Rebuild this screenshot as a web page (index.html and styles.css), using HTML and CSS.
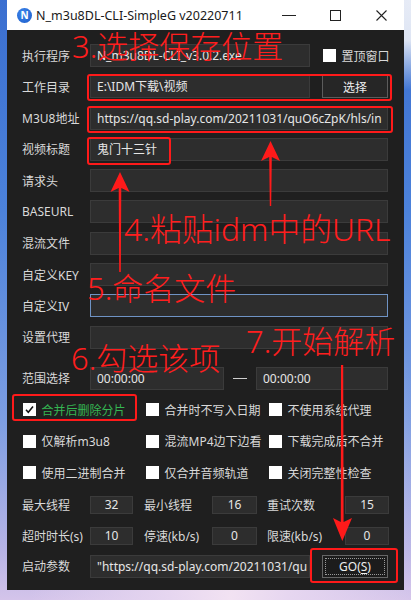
FILE: index.html
```html
<!DOCTYPE html>
<html lang="zh-CN">
<head>
<meta charset="utf-8">
<title>N_m3u8DL-CLI-SimpleG</title>
<link rel="stylesheet" href="styles.css">
</head>
<body>
<div class="win">
  <div class="titlebar">
    <span class="app-icon">N</span>
    <span class="title">N_m3u8DL-CLI-SimpleG v20220711</span>
    <div class="ctrls">
      <span class="ctrl"><svg width="14" height="10" viewBox="0 0 14 10"><line x1="0" y1="5.5" x2="14" y2="5.5" stroke="#222" stroke-width="1"/></svg></span>
      <span class="ctrl"><svg width="11" height="11" viewBox="0 0 11 11"><rect x="0.5" y="0.5" width="10" height="10" fill="none" stroke="#222" stroke-width="1"/></svg></span>
      <span class="ctrl"><svg width="11" height="11" viewBox="0 0 11 11"><path d="M0.5 0.5 L10.5 10.5 M10.5 0.5 L0.5 10.5" stroke="#222" stroke-width="1.1"/></svg></span>
    </div>
  </div>
  <div class="content">
    <div class="form">
      <div class="row">
        <span class="lbl">执行程序</span>
        <div class="inp w220">N_m3u8DL-CLI_v3.0.2.exe</div>
        <span class="cb top-cb"><span class="box"></span>置顶窗口</span>
      </div>
      <div class="row">
        <span class="lbl">工作目录</span>
        <div class="inp w220">E:\IDM下载\视频</div>
        <span class="btn">选择</span>
      </div>
      <div class="row">
        <span class="lbl">M3U8地址</span>
        <div class="inp full">https://qq.sd-play.com/20211031/quO6cZpK/hls/in</div>
      </div>
      <div class="row">
        <span class="lbl">视频标题</span>
        <div class="inp full">鬼门十三针</div>
      </div>
      <div class="row">
        <span class="lbl">请求头</span>
        <div class="inp full"></div>
      </div>
      <div class="row">
        <span class="lbl">BASEURL</span>
        <div class="inp full"></div>
      </div>
      <div class="row">
        <span class="lbl">混流文件</span>
        <div class="inp full"></div>
      </div>
      <div class="row">
        <span class="lbl">自定义KEY</span>
        <div class="inp full"></div>
      </div>
      <div class="row">
        <span class="lbl">自定义IV</span>
        <div class="inp full focus"></div>
      </div>
      <div class="row">
        <span class="lbl">设置代理</span>
        <div class="inp full"></div>
      </div>
    </div>
    <div class="row range">
      <span class="lbl">范围选择</span>
      <div class="inp w134">00:00:00</div>
      <span class="dash"></span>
      <div class="inp full">00:00:00</div>
    </div>
    <div class="checks">
      <span class="cb on"><span class="box"><svg width="13" height="13" viewBox="0 0 13 13"><path d="M3 6.8 L5.3 9.2 L10 3.6" fill="none" stroke="#111" stroke-width="1.6"/></svg></span>合并后删除分片</span>
      <span class="cb"><span class="box"></span>合并时不写入日期</span>
      <span class="cb"><span class="box"></span>不使用系统代理</span>
      <span class="cb"><span class="box"></span>仅解析m3u8</span>
      <span class="cb"><span class="box"></span>混流MP4边下边看</span>
      <span class="cb"><span class="box"></span>下载完成后不合并</span>
      <span class="cb"><span class="box"></span>使用二进制合并</span>
      <span class="cb"><span class="box"></span>仅合并音频轨道</span>
      <span class="cb"><span class="box"></span>关闭完整性检查</span>
    </div>
    <div class="nums">
      <div class="nrow">
        <span class="lbl">最大线程</span>
        <div class="num n1">32</div>
        <span class="lbl l2">最小线程</span>
        <div class="num n2">16</div>
        <span class="lbl l3">重试次数</span>
        <div class="num n3">15</div>
      </div>
      <div class="nrow">
        <span class="lbl">超时时长(s)</span>
        <div class="num n1">10</div>
        <span class="lbl l2">停速(kb/s)</span>
        <div class="num n2">0</div>
        <span class="lbl l3">限速(kb/s)</span>
        <div class="num n3">0</div>
      </div>
    </div>
    <div class="row last">
      <span class="lbl">启动参数</span>
      <div class="inp w220">"https://qq.sd-play.com/20211031/qu</div>
      <span class="btn go"><span class="go-in">GO(<u>S</u>)</span></span>
    </div>
  </div>
</div>

<div class="annot">
  <div class="rbox ra"></div>
  <div class="rbox rb"></div>
  <div class="rbox rc"></div>
  <div class="rbox rd"></div>
  <div class="rbox re"></div>
  <div class="note t3">3.选择保存位置</div>
  <div class="note t4">4.粘贴idm中的URL</div>
  <div class="note t5">5.命名文件</div>
  <div class="note t6">6.勾选该项</div>
  <div class="note t7">7.开始解析</div>
  <svg class="arrows" width="411" height="600" viewBox="0 0 411 600">
    <g fill="#ff1a1a">
      <path d="M270.5 141 L280 161 L271.8 157 L271.2 206 L269.8 206 L269.2 157 L261 161 Z"/>
      <path d="M120 172 L129.5 192 L121.3 188 L120.8 272 L119.2 272 L118.7 188 L110.5 192 Z"/>
      <path d="M341 365 L343.2 365 L343.6 522 L352 518 L342.3 541 L333 518 L340.8 522 Z"/>
    </g>
  </svg>
</div>
</body>
</html>
```
FILE: styles.css
```css
body {
  margin: 0;
  width: 411px;
  height: 600px;
  overflow: hidden;
  position: relative;
  font-family: "Noto Sans", "Noto Sans CJK SC", sans-serif;
  background:
    radial-gradient(circle at 411px 0, rgba(240, 242, 248, 0.95) 0, rgba(240, 242, 248, 0.9) 40px, rgba(240, 242, 248, 0) 90px),
    radial-gradient(ellipse at 230px 600px, #f2e2f2 0, #e6d6f0 60px, rgba(220, 210, 240, 0) 200px),
    linear-gradient(to bottom, #3b6fd0 0%, #4c82db 35%, #7d9ee2 70%, #b8b4e6 92%, #d4c4ea 100%);
}

.win {
  margin-left: 7px;
  width: 397px;
  height: 590px;
  background: #1f1f1f;
  display: flex;
  flex-direction: column;
}

.titlebar {
  height: 30px;
  flex: none;
  background: #ffffff;
  display: flex;
  align-items: center;
  padding-left: 10px;
}

.app-icon {
  width: 15px;
  height: 15px;
  border-radius: 50%;
  background: radial-gradient(circle at 40% 35%, #3d86ec, #1b5cc9);
  color: #fff;
  font-family: "Noto Sans", sans-serif;
  font-weight: 700;
  font-size: 10px;
  line-height: 15px;
  text-align: center;
  flex: none;
}

.title {
  margin-left: 4px;
  font-size: 12.5px;
  color: #1a1a1a;
  white-space: nowrap;
}

.ctrls {
  margin-left: auto;
  display: flex;
}

.ctrl {
  width: 46px;
  height: 30px;
  display: flex;
  align-items: center;
  justify-content: center;
}

.content {
  padding: 14px 16px 0 15px;
  display: flex;
  flex-direction: column;
}

.form {
  display: flex;
  flex-direction: column;
  gap: 8.3px;
}

.row {
  display: flex;
  align-items: center;
  height: 23px;
}

.lbl {
  width: 68px;
  flex: none;
  font-size: 12px;
  color: #d9d9d9;
  white-space: nowrap;
}

.inp {
  height: 23px;
  box-sizing: border-box;
  background: #2d2d2d;
  border: 1px solid #3b3b3b;
  color: #e6e6e6;
  font-size: 12px;
  line-height: 21px;
  padding-left: 6px;
  white-space: nowrap;
  overflow: hidden;
  flex: none;
}

.w220 { width: 220px; }
.w134 { width: 134px; }
.full { flex: 1 1 auto; width: auto; }

.focus { border-color: #6f93c4; }

.btn {
  margin-left: 12px;
  width: 66px;
  height: 23px;
  box-sizing: border-box;
  background: #262626;
  border: 1px solid #5c5c5c;
  color: #eeeeee;
  font-size: 12px;
  display: flex;
  align-items: center;
  justify-content: center;
  flex: none;
}

.go {
  background: #1c1c1c;
  border-color: #666;
  padding: 2px;
}

.go-in {
  flex: 1;
  align-self: stretch;
  display: flex;
  align-items: center;
  justify-content: center;
  border: 1px dotted #9a9a9a;
}

.go-in u {
  text-underline-offset: 2px;
}

.cb {
  display: flex;
  align-items: center;
  gap: 5.5px;
  font-size: 12px;
  color: #d9d9d9;
  white-space: nowrap;
}

.top-cb {
  margin-left: 13px;
}

.box {
  width: 13px;
  height: 13px;
  background: #ffffff;
  flex: none;
  display: block;
}

.box svg { display: block; }

.cb.on { color: #35b552; }

.range {
  margin-top: 18.3px;
}

.dash {
  width: 14px;
  height: 1px;
  background: #cfcfcf;
  margin: 0 9px 0 9px;
  flex: none;
}

.checks {
  margin-top: 9px;
  padding-left: 1px;
  display: grid;
  grid-template-columns: 123px 123px auto;
  grid-auto-rows: 22px;
  row-gap: 9.5px;
}

.nums {
  margin-top: 12px;
  display: flex;
  flex-direction: column;
  gap: 13px;
}

.nrow {
  display: flex;
  align-items: center;
  height: 18px;
}

.num {
  height: 18px;
  box-sizing: border-box;
  background: #2d2d2d;
  border: 1px solid #3b3b3b;
  color: #e6e6e6;
  font-size: 12px;
  line-height: 16px;
  text-align: center;
  flex: none;
}

.n1 { width: 43px; }
.n2 { width: 45px; }
.n3 { width: 44px; }
.l2 { margin-left: 11px; width: 68px; }
.l3 { margin-left: 10px; width: 78px; }

.last {
  margin-top: 10px;
}

/* annotations overlay */
.annot {
  position: absolute;
  left: 0;
  top: 0;
  width: 411px;
  height: 600px;
  pointer-events: none;
}

.rbox {
  position: absolute;
  box-sizing: border-box;
  border: 2px solid #ff1a1a;
  border-radius: 3px;
}

.ra { left: 87px; top: 74px; width: 305px; height: 27px; }
.rb { left: 87px; top: 106px; width: 306px; height: 27px; }
.rc { left: 87px; top: 137px; width: 84px; height: 28px; }
.rd { left: 12px; top: 394px; width: 125px; height: 27px; }
.re { left: 310px; top: 548px; width: 88px; height: 35px; }

.note {
  position: absolute;
  color: #ff1e1e;
  font-family: "Noto Sans", "Noto Sans CJK SC", sans-serif;
  font-weight: 300;
  font-size: 31px;
  line-height: 1;
  white-space: nowrap;
}

.t3 { left: 72px; top: 31px; }
.t4 { left: 124px; top: 213px; font-size: 31.8px; }
.t5 { left: 87px; top: 273px; }
.t6 { left: 71px; top: 343px; }
.t7 { left: 246px; top: 326px; }

.arrows {
  position: absolute;
  left: 0;
  top: 0;
}
```
